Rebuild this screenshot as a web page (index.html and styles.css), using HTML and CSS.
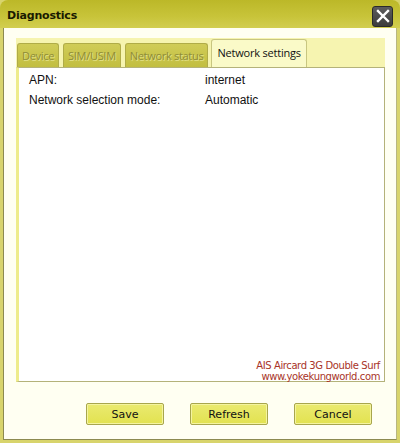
FILE: index.html
```html
<!DOCTYPE html>
<html lang="en">
<head>
	<meta charset="UTF-8">
	<title>Diagnostics</title>
	<link rel="stylesheet" href="styles.css">
</head>
<body>
	<div class="window">
		<div class="titlebar">
			<span class="title">Diagnostics</span>
			<span class="close">
				<svg width="14" height="14" viewBox="0 0 14 14"><path d="M2 2L12 12M12 2L2 12" stroke="#fff" stroke-width="2.4" stroke-linecap="square"/></svg>
			</span>
		</div>
		<div class="main">
			<ul class="tabs">
				<li class="tab">Device</li>
				<li class="tab">SIM/USIM</li>
				<li class="tab">Network status</li>
				<li class="tab current">Network settings</li>
			</ul>
			<div class="panel">
				<div class="row"><span class="label">APN:</span><span class="value">internet</span></div>
				<div class="row"><span class="label">Network selection mode:</span><span class="value">Automatic</span></div>
				<div class="credit">
					<div>AIS Aircard 3G Double Surf</div>
					<div>www.yokekungworld.com</div>
				</div>
			</div>
			<div class="buttons">
				<span class="btn">Save</span>
				<span class="btn">Refresh</span>
				<span class="btn">Cancel</span>
			</div>
		</div>
	</div>
</body>
</html>
```
FILE: styles.css
```css
*{
	margin:0px;
	padding:0px;
	box-sizing:border-box;
}
ul li{
	list-style:none;
}
body{
	width:400px;
	height:443px;
	background:#fff;
	font-family:"Liberation Sans", Arial, sans-serif;
	font-size:12px;
	color:#111;
}
.window{
	width:400px;
	height:443px;
	border-left:3px solid #d8d46c;
	border-right:3px solid #d8d46c;
	border-bottom:3px solid #d8d46c;
	background:#d8d46c;
	display:flex;
	flex-direction:column;
}
.titlebar{
	height:28px;
	margin:0 -3px;
	border-radius:8px 8px 0 0;
	background:linear-gradient(#bcb828, #c8c43a 60%, #d2ce50);
	display:flex;
	align-items:center;
	justify-content:space-between;
	padding:0 7px 0 7px;
}
.title{
	font-family:"DejaVu Sans", Verdana, sans-serif;
	font-weight:bold;
	font-size:11px;
	color:#1a1a00;
	letter-spacing:-0.2px;
	margin-top:3px;
}
.close{
	width:21px;
	height:21px;
	background:linear-gradient(#5c5c5c, #3c3c3c);
	border:1px solid #2a2a2a;
	border-radius:3px;
	display:flex;
	align-items:center;
	justify-content:center;
	margin-top:4px;
}
.main{
	flex:1;
	background:#fffff2;
	border-left:1px solid #8c8a50;
	border-right:1px solid #b8b680;
	border-bottom:1px solid #8c8a50;
	padding:10px 10px 0 12px;
	display:flex;
	flex-direction:column;
}
.tabs{
	height:29px;
	background:#f6f4b0;
	display:flex;
	align-items:flex-end;
	padding:0 0 0 1px;
	margin-right:1px;
}
.tab{
	height:24px;
	background:linear-gradient(#d0cc58, #c2be40);
	border:1px solid #b0ac48;
	border-bottom:none;
	border-radius:3px 3px 0 0;
	margin-right:4px;
	padding:4px 4px 0 4px;
	font-family:"Open Sans", "DejaVu Sans", sans-serif;
	font-size:11px;
	color:#8e8c38;
	text-shadow:1px 1px 0 #e2e088;
	letter-spacing:-0.3px;
}
.tab:nth-child(3){
	margin-right:3px;
}
.tab.current{
	height:28px;
	background:#fafac8;
	border:1px solid #c8c680;
	border-bottom:none;
	color:#111;
	text-shadow:none;
	padding:5px 5px 0 5px;
	margin-right:0;
	letter-spacing:-0.2px;
}
.panel{
	height:315px;
	background:#fff;
	border:1px solid #b4b27a;
	border-left:3px solid #eeec8c;
	padding:2px 0 0 10px;
	display:flex;
	flex-direction:column;
	margin-right:1px;
}
.row{
	display:flex;
	height:20px;
	align-items:center;
}
.label{
	width:176px;
}
.credit{
	margin-top:auto;
	margin-bottom:-1px;
	align-self:flex-end;
	text-align:right;
	padding-right:4px;
	font-family:"DejaVu Sans", Verdana, sans-serif;
	font-size:10px;
	letter-spacing:-0.4px;
	line-height:11px;
	color:#a83428;
}
.buttons{
	display:flex;
	justify-content:flex-end;
	gap:26px;
	padding:21px 14px 0 0;
}
.btn{
	width:78px;
	height:22px;
	background:linear-gradient(#eaea70, #e2e250);
	border:1px solid #a8a64c;
	border-radius:2px;
	box-shadow:inset 0 0 0 1px #f4f4a0;
	display:flex;
	align-items:center;
	justify-content:center;
	font-family:"DejaVu Sans", Verdana, sans-serif;
	font-size:11px;
	color:#111;
}
```
